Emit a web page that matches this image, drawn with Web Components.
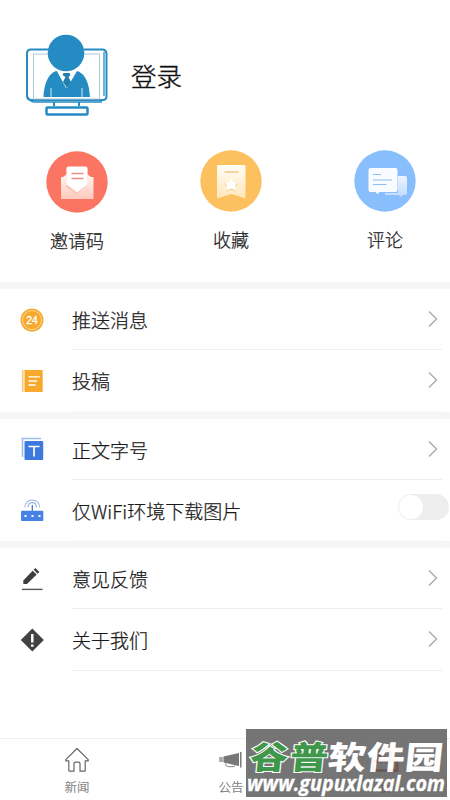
<!DOCTYPE html>
<html lang="zh-CN">
<head>
<meta charset="utf-8">
<title>我的</title>
<style>
html,body{margin:0;padding:0;background:#fff}
body{font-family:"Noto Sans CJK SC","Noto Sans",sans-serif;font-weight:300;color:#222}
</style>
</head>
<body>
<profile-page></profile-page>
<script>
const icons = {
  invite: `<svg width="62" height="62" viewBox="0 0 62 62"><defs><linearGradient id="g" x2="0" y2="1"><stop offset="0" stop-color="#fff5f1"/><stop offset="1" stop-color="#ffc9bd"/></linearGradient></defs><circle cx="31" cy="31" r="30.7" fill="#fb7562"/><path d="M15 26h2l4-3h20l4 3h2.500v22h-32.500z" fill="url(#g)"/><path d="M20.500 18q0-2 2-2h17q2 0 2 2v16l-10.500 9-10.500-7z" fill="#ffb4a5" opacity=".75"/><path d="M20.500 17.500q0-2 2-2h17q2 0 2 2v16l-10.500 8-10.500-8z" fill="#fff"/><path d="M25.500 22.500h12m-12 5h12" stroke="#ef8e80" stroke-width="1.300"/></svg>`,
  favorite: `<svg width="62" height="62" viewBox="0 0 62 62"><defs><linearGradient id="g" x2="0" y2="1"><stop offset="0" stop-color="#fffdf7"/><stop offset="1" stop-color="#ffe6b8"/></linearGradient></defs><circle cx="31" cy="31" r="30.700" fill="#fcc05e"/><path d="M17.500 15q-.5 0-.5 1v32.500l14.500-4.500 14 4.500v-32.500q0-1-1-1z" fill="url(#g)"/><path d="M24.500 22h14" stroke="#eac071" stroke-width="1.200"/><path d="M31 28l2.200 4.400 5.300.6-3.800 3.600 1 5-4.700-2.300-4.700 2.300 1-5-3.800-3.600 5.300-.6z" fill="#fff"/><path d="M24.500 33l2 3m11-3l-2 3m-9 5l4.500-2 4.500 2" stroke="#edca87" fill="none"/></svg>`,
  comment: `<svg width="62" height="62" viewBox="0 0 62 62"><defs><linearGradient id="g" x2="0" y2="1"><stop offset="0" stop-color="#fff"/><stop offset="1" stop-color="#c8e0ff"/></linearGradient></defs><circle cx="31" cy="31" r="30.700" fill="#89befc"/><path d="M44 26h7q2 0 2 2v15q0 2-2 2h-2l-2 2-2-2h-14v-2h13z" fill="url(#g)" opacity=".85"/><path d="M16.500 18h25q2 0 2 2v20q0 2-2 2h-16l-2 2-2-2h-5q-2 0-2-2v-20q0-2 2-2z" fill="#f8fbff"/><path d="M19 24.500h8m-8 5.500h19m-19 4.500h13.500" stroke="#8bbdf0" stroke-width="1.200"/></svg>`,
  push: `<svg width="24" height="24" viewBox="0 0 24 24"><circle cx="12" cy="12" r="11.500" fill="#f6a92c"/><circle cx="12" cy="12" r="9.500" fill="none" stroke="#ffdda2" stroke-width=".9"/><text x="12" y="15.700" text-anchor="middle" font-family="Liberation Sans,sans-serif" font-size="10.500" fill="#fff" stroke="#fff" stroke-width=".3">24</text></svg>`,
  draft: `<svg width="24" height="24" viewBox="0 0 24 24"><path d="M2.700 1v22" stroke="#fac977" stroke-width="1.700"/><path d="M4.500 1H22q.7 0 .7.700V22.300q0 .7-.7.700H4.500z" fill="#f6a92c"/><path d="M8.500 7.800h11.500m-11.500 4.200h8.500m-8.500 4h7" stroke="#fff" stroke-width="1.300"/></svg>`,
  font: `<svg width="24" height="24" viewBox="0 0 24 24"><path d="M2.500 20V1.500h18.500" fill="none" stroke="#9cbced" stroke-width="1.600"/><rect x="4.500" y="4" width="18.700" height="19" rx="1" fill="#3d7ade"/><path d="M8.500 9.500h11m-5.500 0v10" stroke="#fff" stroke-width="1.700"/></svg>`,
  wifi: `<svg width="24" height="24" viewBox="0 0 24 24"><path d="M4.800 9.500C5-.5 19.500-.5 19.700 9.500M8 9.500C8 3 16.500 3 16.500 9.500" fill="none" stroke="#9bb6df" stroke-width="1.100"/><path d="M12.300 7v7" stroke="#4179d1" stroke-width="1.300"/><rect x="1" y="12.800" width="22.300" height="10.300" rx="1" fill="#4681e4"/><path d="M4.500 18h2m5 0h2m5 0h2" stroke="#fff" stroke-width="1.800"/></svg>`,
  feedback: `<svg width="24" height="24" viewBox="0 0 24 24"><path d="M3.300 13.500L12.700 3.700l4 3.800L7 17H3.300z" fill="#3d3d3d"/><path d="M13.700 2.700l1.600-1.700 4 4-1.600 1.700z" fill="#3d3d3d"/><path d="M2 22.400h20.500" stroke="#555" stroke-width="1.400"/></svg>`,
  about: `<svg width="24" height="24" viewBox="0 0 24 24"><path d="M12.300.5L23.800 12 12.300 23.500.8 12z" fill="#424242"/><path d="M12.300 6v8.500m0 2v2.300" stroke="#fff" stroke-width="2.500"/></svg>`,
  home: `<svg width="26" height="26" viewBox="0 0 26 26"><path d="M13 1.500L1.800 12.700v1.200h3v9.500q0 .8.800.8h4.400v-7.500q0-1.500 1.500-1.500h3q1.500 0 1.500 1.500v7.500h4.400q.8 0 .8-.8v-9.500h3v-1.200z" fill="none" stroke="#666" stroke-width="1.200" stroke-linejoin="round"/></svg>`,
  horn: `<svg width="26" height="26" viewBox="0 0 26 26"><path d="M5.500 9.500L21 6v13L5.500 15.500z" fill="#777"/><path d="M22.800 5v15.500" stroke="#666" stroke-width="1.300"/><path d="M4 10v5M2 10v5" stroke="#777" stroke-width="1.200"/><path d="M7.500 16.500q0 3.200 3 3.200h4.500q2 0 2-1.500" fill="none" stroke="#888"/></svg>`,
  user: `<svg width="30" height="26" viewBox="0 0 30 26"><path d="M9.500 13V8q0-5 5.500-5t5.500 5v5M3 14h24v9.500H3z" fill="none" stroke="#c2353d" stroke-width="3"/></svg>`
};
function element(name, render) {
  customElements.define(name, class extends HTMLElement {
    connectedCallback() {
      if (!this.shadowRoot) this.attachShadow({mode: 'open'}).innerHTML = render(this);
    }
  });
}
element('ui-icon', e => `<style>:host{display:block;line-height:0}svg{display:block}</style>${icons[e.getAttribute('name')]}`);
element('user-header', () => `
<style>:host{display:flex;align-items:flex-start;height:117px;padding:33px 0 0 24px;box-sizing:border-box;gap:21px}
.name{font-size:25.500px;line-height:38px;margin-top:23px;color:#111;-webkit-text-stroke:.4px #111}</style>
<svg width="86" height="86" viewBox="0 0 86 86">
<path d="M25 16.500H7q-4 0-4 4v42q0 4.500 4.500 4.500H79q3.500 0 3.500-4v-42q0-4.500-4.500-4.500H60" fill="#fff" stroke="#248cc3" stroke-width="2"/>
<path d="M80 19v44M4 64q2 5 6 5h68" fill="none" stroke="#248cc3" stroke-width="1.300"/>
<rect x="9.500" y="21" width="66" height="45" fill="none" stroke="#b0c8d5" stroke-width="1"/>
<path d="M19.500 64C20 51 25 39 33 38L42 55 52 38C61 39 65.500 51 66 64z" fill="#248cc3"/>
<path d="M27 64v-9m31 9v-9" stroke="#acd0e7" stroke-width="1.300"/>
<path d="M33 38l10 17 10-17z" fill="#fff"/>
<path d="M39.500 40h6l1 2-2 2 2.500 5-4 6-4-6 2.500-5-3-2z" fill="#227eaa"/>
<circle cx="42" cy="20" r="18.300" fill="#248cc3"/>
<path d="M30 69v4m25-4v4" stroke="#248cc3" stroke-width="2"/>
<rect x="22.500" y="74.500" width="41" height="7" rx="1" fill="#fff" stroke="#248cc3" stroke-width="2.500"/></svg>
<span class="name">登录</span>`);
element('quick-action', e => `<style>:host{display:flex;flex:none;flex-direction:column;align-items:center;width:154px}
span{font-size:18px;line-height:26px;margin-top:14px;color:#222;-webkit-text-stroke:.25px #222}</style>
<ui-icon name="${e.getAttribute('icon')}"></ui-icon><span><slot></slot></span>`);
element('quick-actions', () => `<style>:host{display:flex;height:165px;padding-top:33px;box-sizing:border-box}</style><slot></slot>`);
element('menu-group', () => `<style>:host{display:block;border-top:7px solid #f6f6f6}</style><slot></slot>`);
element('menu-row', e => `<style>
:host{display:flex;height:61.250px;padding-left:20px;align-items:center;box-sizing:border-box}
.body{display:flex;align-items:center;justify-content:space-between;height:100%;flex:1;margin:0 8px 0 28px;border-bottom:1px solid #eee;box-sizing:border-box;font-size:19px;color:#1a1a1a}
:host([last]) .body{border-color:#fafafa}
.label{line-height:28px;white-space:nowrap;margin-top:2px;-webkit-text-stroke:.25px #1a1a1a}
.arrow{margin-right:4.500px}
.switch{width:51px;height:26px;flex:none;margin:-6px -6.500px 0 0;border-radius:13px;background:#eee;display:flex;align-items:center;padding:1px;box-sizing:border-box}
.switch i{width:24px;height:24px;border-radius:50%;background:#fff}</style>
<ui-icon name="${e.getAttribute('icon')}"></ui-icon><div class="body"><span class="label"><slot></slot></span>${e.hasAttribute('toggle') ? '<span class="switch"><i></i></span>' : '<svg class="arrow" width="10" height="18" viewBox="0 0 10 18"><path d="M1 1.500l7.500 7.500L1 16.500" fill="none" stroke="#aaa" stroke-width="1.400"/></svg>'}</div>`);
element('tab-item', e => `<style>:host{display:flex;flex:none;flex-direction:column;align-items:center;width:154px;color:#666}
:host([active]){color:#c2353d;width:142px;padding-left:6px;padding-right:6px;box-sizing:border-box}
ui-icon{height:26px}span{font-size:12.500px;line-height:18px;margin-top:5px;-webkit-text-stroke:.15px}</style><ui-icon name="${e.getAttribute('icon')}"></ui-icon><span><slot></slot></span>`);
element('tab-bar', () => `<style>:host{display:flex;height:62px;margin-top:auto;padding-top:8px;box-sizing:border-box;border-top:1px solid #eee}
::slotted([active]){margin-left:6px}</style><slot></slot>`);
element('site-badge', () => `<style>:host{display:block;position:absolute;left:246px;top:729px;width:201px;height:68px;background:rgba(94,94,94,.9);opacity:.95}svg{display:block;overflow:visible}</style>
<svg width="201" height="68" viewBox="0 0 201 68">
<g font-family="Noto Sans CJK SC,sans-serif" font-weight="900" font-size="38" transform="translate(0 40) skewX(-6) scale(1 .84)">
<text x="3" y="0" textLength="78" fill="#359242" stroke="#fff" stroke-width="2.500" paint-order="stroke">谷普</text><text x="81" y="0" textLength="115" fill="#fff">软件园</text></g>
<text x="1" y="62" font-family="Open Sans,sans-serif" font-weight="700" font-style="italic" font-size="21" textLength="198" lengthAdjust="spacingAndGlyphs" fill="#fff" stroke="#fff" stroke-width=".3">www.gupuxlazal.com</text></svg>`);
element('profile-page', () => `<style>:host{display:flex;flex-direction:column;position:relative;width:450px;height:800px;overflow:hidden;background:#fff}
quick-action:nth-child(1){margin-top:1px}</style>
<user-header></user-header>
<quick-actions><quick-action icon="invite">邀请码</quick-action><quick-action icon="favorite">收藏</quick-action><quick-action icon="comment">评论</quick-action></quick-actions>
<menu-group><menu-row icon="push">推送消息</menu-row><menu-row icon="draft" last>投稿</menu-row></menu-group>
<menu-group><menu-row icon="font">正文字号</menu-row><menu-row icon="wifi" toggle last>仅WiFi环境下载图片</menu-row></menu-group>
<menu-group><menu-row icon="feedback">意见反馈</menu-row><menu-row icon="about">关于我们</menu-row></menu-group>
<tab-bar><tab-item icon="home">新闻</tab-item><tab-item icon="horn">公告</tab-item><tab-item icon="user" active>我</tab-item></tab-bar>
<site-badge></site-badge>`);
</script>
</body>
</html>
